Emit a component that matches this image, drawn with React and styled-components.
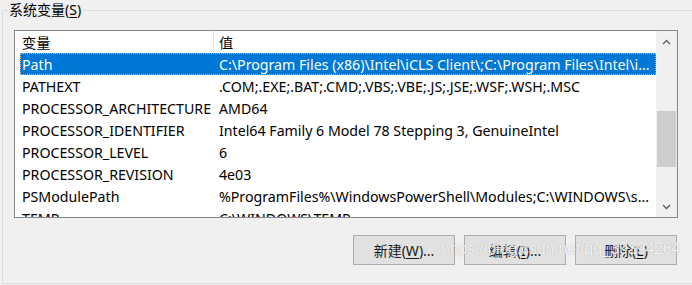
import styled, { createGlobalStyle } from "styled-components";

const GlobalStyle = createGlobalStyle`
  html, body {
    margin: 0;
    padding: 0;
    background: #f0f0f0;
    overflow: hidden;
  }
  body {
    font-family: "Noto Sans", "Noto Sans CJK SC", sans-serif;
    font-size: 14.2px;
    color: #000;
  }
`;

const rows = [
  ["Path", "C:\\Program Files (x86)\\Intel\\iCLS Client\\;C:\\Program Files\\Intel\\i..."],
  ["PATHEXT", ".COM;.EXE;.BAT;.CMD;.VBS;.VBE;.JS;.JSE;.WSF;.WSH;.MSC"],
  ["PROCESSOR_ARCHITECTURE", "AMD64"],
  ["PROCESSOR_IDENTIFIER", "Intel64 Family 6 Model 78 Stepping 3, GenuineIntel"],
  ["PROCESSOR_LEVEL", "6"],
  ["PROCESSOR_REVISION", "4e03"],
  ["PSModulePath", "%ProgramFiles%\\WindowsPowerShell\\Modules;C:\\WINDOWS\\s..."],
  ["TEMP", "C:\\WINDOWS\\TEMP"],
];

function App() {
  return (
    <Page>
      <GlobalStyle />
      <Group>
        <Legend>
          系统变量(<u>S</u>)
        </Legend>
        <Content>
          <ListView>
            <Table>
              <Header>
                <HeadCell>变量</HeadCell>
                <HeadCell divider>值</HeadCell>
              </Header>
              {rows.map(([name, value], i) => (
                <Row key={name} selected={i === 0}>
                  <NameCell>{name}</NameCell>
                  <ValueCell>{value}</ValueCell>
                </Row>
              ))}
            </Table>
            <ScrollBar>
              <ArrowBtn>
                <svg width="9" height="6" viewBox="0 0 9 6">
                  <path d="M1 5 L4.5 1.5 L8 5" fill="none" stroke="#606060" strokeWidth="1.4" />
                </svg>
              </ArrowBtn>
              <Track>
                <Thumb />
              </Track>
              <ArrowBtn>
                <svg width="9" height="6" viewBox="0 0 9 6">
                  <path d="M1 1 L4.5 4.5 L8 1" fill="none" stroke="#606060" strokeWidth="1.4" />
                </svg>
              </ArrowBtn>
            </ScrollBar>
          </ListView>
          <Buttons>
            <Button>
              新建(<u>W</u>)...
            </Button>
            <Button>
              编辑(<u>I</u>)...
            </Button>
            <Button>
              删除(<u>L</u>)
            </Button>
          </Buttons>
        </Content>
      </Group>
      <Watermark>https://blog.csdn.net/qq_39394264</Watermark>
    </Page>
  );
}

const Page = styled.div`
  position: relative;
  width: 692px;
  height: 285px;
  overflow: hidden;
  padding-top: 1px;
  box-sizing: border-box;
`;

const Group = styled.fieldset`
  margin: 0 0 0 2px;
  width: 740px;
  height: 283px;
  box-sizing: border-box;
  border: 1px solid #dcdcdc;
  padding: 0 0 0 11px;
`;

const Legend = styled.legend`
  margin-left: -6px;
  padding: 0 2px 0 1px;
  height: 18px;
  line-height: 18px;
  font-size: 14px;
  color: #000;
  u {
    text-decoration-thickness: 1px;
    text-underline-offset: 2px;
  }
`;

const Content = styled.div`
  width: 664px;
  padding-top: 11px;
`;

const ListView = styled.div`
  display: flex;
  height: 188px;
  box-sizing: border-box;
  border: 1px solid #828790;
  background: #fff;
  overflow: hidden;
`;

const Table = styled.div`
  flex: 1;
  min-width: 0;
  overflow: hidden;
`;

const Header = styled.div`
  display: grid;
  grid-template-columns: 198px 1fr;
  height: 22px;
`;

const HeadCell = styled.div`
  padding-top: 1px;
  line-height: 21px;
  padding-left: ${(p) => (p.divider ? "5px" : "7px")};
  border-left: ${(p) => (p.divider ? "1px solid #e5e5e5" : "none")};
`;

const Row = styled.div`
  display: grid;
  grid-template-columns: 193px 1fr;
  height: 22px;
  margin-left: 5px;
  box-sizing: border-box;
  padding-top: 2px;
  line-height: 20px;
  background: ${(p) => (p.selected ? "#0078d7" : "transparent")};
  color: ${(p) => (p.selected ? "#fff" : "#000")};
  outline: ${(p) => (p.selected ? "1px dotted #f2a36b" : "none")};
  outline-offset: -1px;
`;

const NameCell = styled.div`
  padding-left: 2px;
  white-space: nowrap;
  overflow: hidden;
`;

const ValueCell = styled.div`
  padding-left: 6px;
  white-space: nowrap;
  overflow: hidden;
`;

const ScrollBar = styled.div`
  width: 21px;
  display: flex;
  flex-direction: column;
  background: #f0f0f0;
`;

const ArrowBtn = styled.div`
  height: 21px;
  display: flex;
  align-items: center;
  justify-content: center;
`;

const Track = styled.div`
  flex: 1;
  padding-top: 59px;
`;

const Thumb = styled.div`
  width: 19px;
  margin-left: 1px;
  height: 56px;
  background: #cdcdcd;
`;

const Buttons = styled.div`
  display: flex;
  justify-content: flex-end;
  gap: 9px;
  margin-top: 17px;
  padding-right: 1px;
`;

const Button = styled.button`
  width: 102px;
  height: 30px;
  border: 1px solid #adadad;
  background: #e1e1e1;
  font-family: "Noto Sans", "Noto Sans CJK SC", sans-serif;
  font-size: 14px;
  color: #1a1a1a;
  padding: 0;
  u {
    text-decoration-thickness: 1px;
    text-underline-offset: 2px;
  }
`;

const Watermark = styled.div`
  position: absolute;
  left: 441px;
  top: 240px;
  font-family: "Liberation Sans", Arial, sans-serif;
  font-size: 16px;
  letter-spacing: -0.2px;
  color: rgba(255, 255, 255, 0.85);
  text-shadow: 0 0 1px rgba(110, 110, 110, 0.55);
  pointer-events: none;
`;

export default App;
